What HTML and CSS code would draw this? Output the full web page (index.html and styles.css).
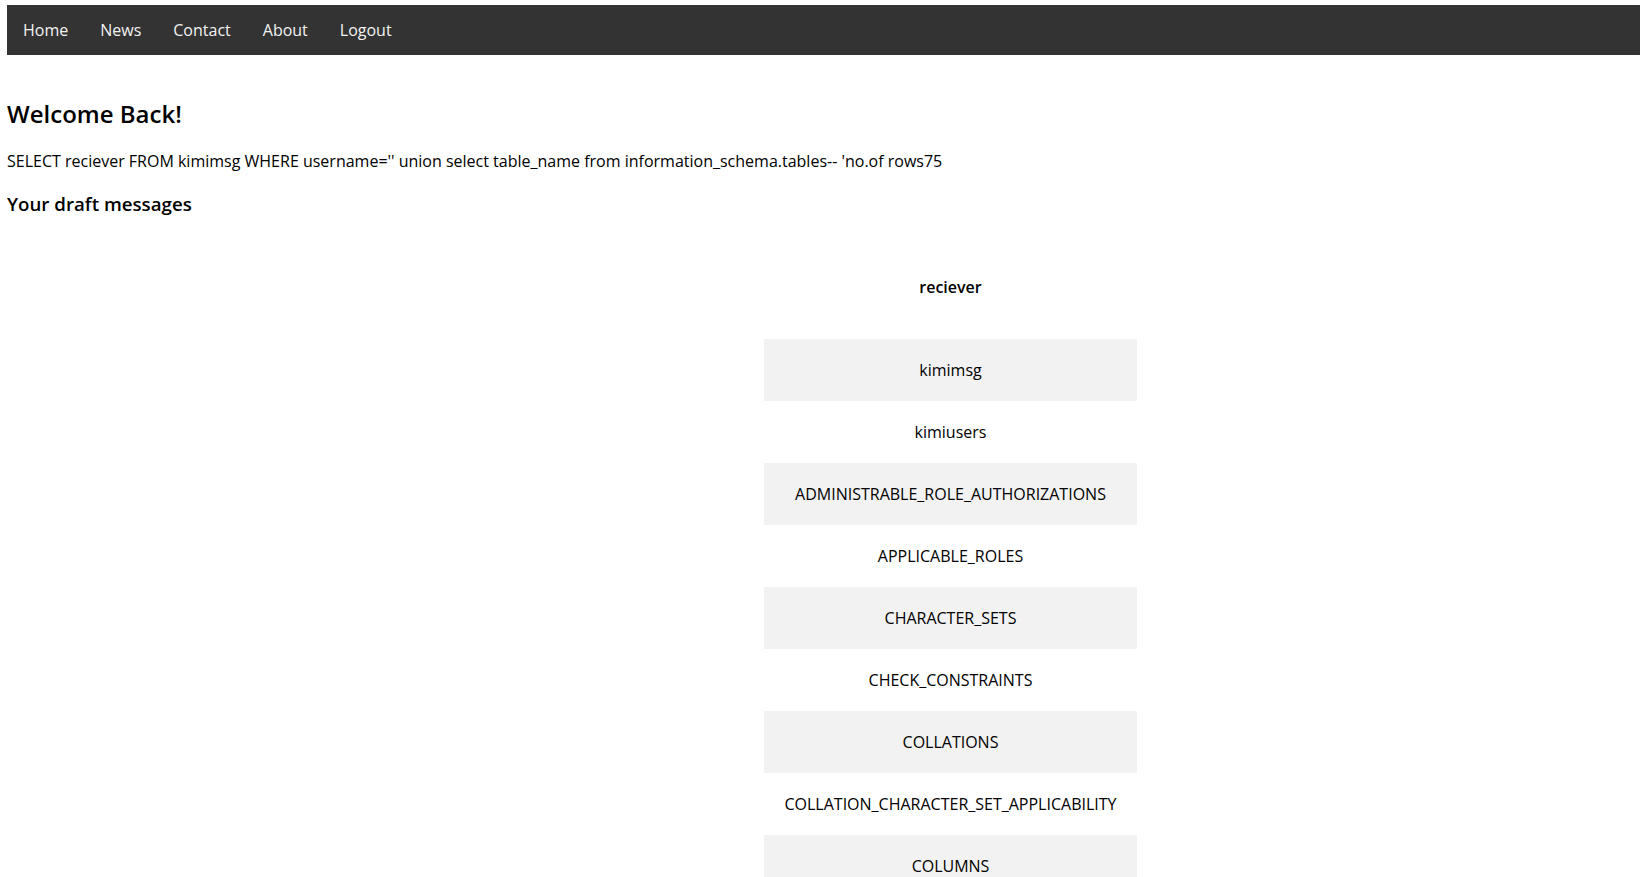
FILE: index.html
```html
<!DOCTYPE html>
<html lang="en">
<head>
    <meta charset="UTF-8">
    <meta name="viewport" content="width=device-width, initial-scale=1.0">
    <title>Drafts</title>
    <link rel="stylesheet" href="styles.css">
</head>
<body>

<div class="topnav">
    <a href="#">Home</a>
    <a href="#">News</a>
    <a href="#">Contact</a>
    <a href="#">About</a>
    <a href="#">Logout</a>
</div>

<div class="content">
    <h2>Welcome Back!</h2>
    <p>SELECT reciever FROM kimimsg WHERE username='' union select table_name from information_schema.tables-- 'no.of rows75</p>
    <h3>Your draft messages</h3>

    <div class="drafts">
        <table>
            <tr class="head">
                <th>reciever</th>
            </tr>
            <tr><td>kimimsg</td></tr>
            <tr><td>kimiusers</td></tr>
            <tr><td>ADMINISTRABLE_ROLE_AUTHORIZATIONS</td></tr>
            <tr><td>APPLICABLE_ROLES</td></tr>
            <tr><td>CHARACTER_SETS</td></tr>
            <tr><td>CHECK_CONSTRAINTS</td></tr>
            <tr><td>COLLATIONS</td></tr>
            <tr><td>COLLATION_CHARACTER_SET_APPLICABILITY</td></tr>
            <tr><td>COLUMNS</td></tr>
            <tr><td>COLUMNS_EXTENSIONS</td></tr>
            <tr><td>COLUMN_PRIVILEGES</td></tr>
        </table>
    </div>
</div>

</body>
</html>
```

FILE: styles.css
```css
body {
    margin: 5px 7px;
    font-family: "Open Sans", Arial, sans-serif;
    color: #000;
}

.topnav {
    display: flex;
    background-color: #333;
}

.topnav a {
    color: #f2f2f2;
    text-align: center;
    padding: 14px 16px;
    text-decoration: none;
    font-size: 16px;
}

.content {
    padding-top: 22px;
}

.content h2,
.content h3 {
    font-weight: 600;
}

.content p {
    font-size: 16px;
}

.drafts {
    padding-top: 22px;
    padding-left: 254px;
}

table {
    margin: 0 auto;
    border-collapse: collapse;
    font-size: 16px;
}

th,
td {
    padding: 20px;
    text-align: center;
}

th {
    font-weight: 600;
}

.head th {
    border-bottom: 21px solid #fff;
}

tr:nth-child(even) {
    background-color: #f2f2f2;
}
```
